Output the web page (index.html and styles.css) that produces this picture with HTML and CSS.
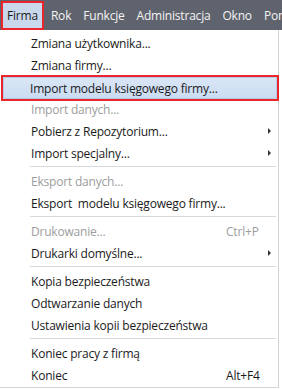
FILE: index.html
```html
<!DOCTYPE html>
<html lang="pl">
<head>
	<meta charset="UTF-8">
	<meta name="viewport" content="width=device-width, initial-scale=1.0">
	<title>Firma</title>
	<link rel="stylesheet" href="styles.css">
</head>
<body>
	<div id="menubar">
		<span class="bar-item active">Firma</span>
		<span class="bar-item">Rok</span>
		<span class="bar-item">Funkcje</span>
		<span class="bar-item">Administracja</span>
		<span class="bar-item">Okno</span>
		<span class="bar-item">Pomoc</span>
	</div>
	<ul id="dropdown">
		<li class="mi"><span class="label">Zmiana użytkownika...</span></li>
		<li class="mi"><span class="label">Zmiana firmy...</span></li>
		<li class="mi hot"><span class="label">Import modelu księgowego firmy...</span></li>
		<li class="mi off"><span class="label">Import danych...</span></li>
		<li class="mi"><span class="label">Pobierz z Repozytorium...</span><span class="sub"></span></li>
		<li class="mi"><span class="label">Import specjalny...</span><span class="sub"></span></li>
		<li class="sep"></li>
		<li class="mi off"><span class="label">Eksport danych...</span></li>
		<li class="mi"><span class="label">Eksport&nbsp; modelu księgowego firmy...</span></li>
		<li class="sep"></li>
		<li class="mi off"><span class="label">Drukowanie...</span><span class="key">Ctrl+P</span></li>
		<li class="mi"><span class="label">Drukarki domyślne...</span><span class="sub"></span></li>
		<li class="sep"></li>
		<li class="mi"><span class="label">Kopia bezpieczeństwa</span></li>
		<li class="mi"><span class="label">Odtwarzanie danych</span></li>
		<li class="mi"><span class="label">Ustawienia kopii bezpieczeństwa</span></li>
		<li class="sep"></li>
		<li class="mi"><span class="label">Koniec pracy z firmą</span></li>
		<li class="mi"><span class="label">Koniec</span><span class="key">Alt+F4</span></li>
	</ul>
</body>
</html>
```

FILE: styles.css
```css
body {
  margin: 0;
  background: #fff;
  font-family: "Open Sans", "Noto Sans", sans-serif;
  font-size: 12px;
  letter-spacing: -0.2px;
  color: #1b1b1b;
  overflow: hidden;
}

#menubar {
  display: flex;
  height: 30px;
  background: #5f636e;
  white-space: nowrap;
  overflow: hidden;
}

.bar-item {
  display: flex;
  align-items: center;
  padding: 0 6px;
  color: #f4f4f4;
}

.bar-item.active {
  margin: 1px 1px 0 1px;
  padding: 0 4px;
  background: #c9d8ec;
  border: 2px solid #e8262b;
  color: #1b1b1b;
}

#dropdown {
  list-style: none;
  margin: 0;
  padding: 2px 0 1px;
  width: 278px;
  border-right: 1px solid #d4d4d4;
  border-bottom: 1px solid #d4d4d4;
}

.mi {
  display: flex;
  align-items: center;
  height: 22px;
  padding-left: 31px;
  white-space: nowrap;
}

.mi .label {
  flex: 1;
}

.mi.off {
  color: #9d9d9d;
}

.mi .key {
  width: 40px;
  margin-right: 12px;
}

.mi .sub {
  width: 12px;
  height: 22px;
  position: relative;
}
.mi .sub::after {
  content: "";
  position: absolute;
  left: 2px;
  top: 8px;
  border-left: 3px solid #333;
  border-top: 3px solid transparent;
  border-bottom: 3px solid transparent;
}

.mi.hot {
  margin: 1px 1px -1px 3px;
  padding-left: 27px;
  background: linear-gradient(#dae6f6, #cadcf2);
  box-shadow: inset 0 0 0 1px #b4c9e6, 0 0 0 2px #e8262b;
}

.sep {
  height: 1px;
  margin: 2px 2px 3px 30px;
  background: #d9d9d9;
}
```
